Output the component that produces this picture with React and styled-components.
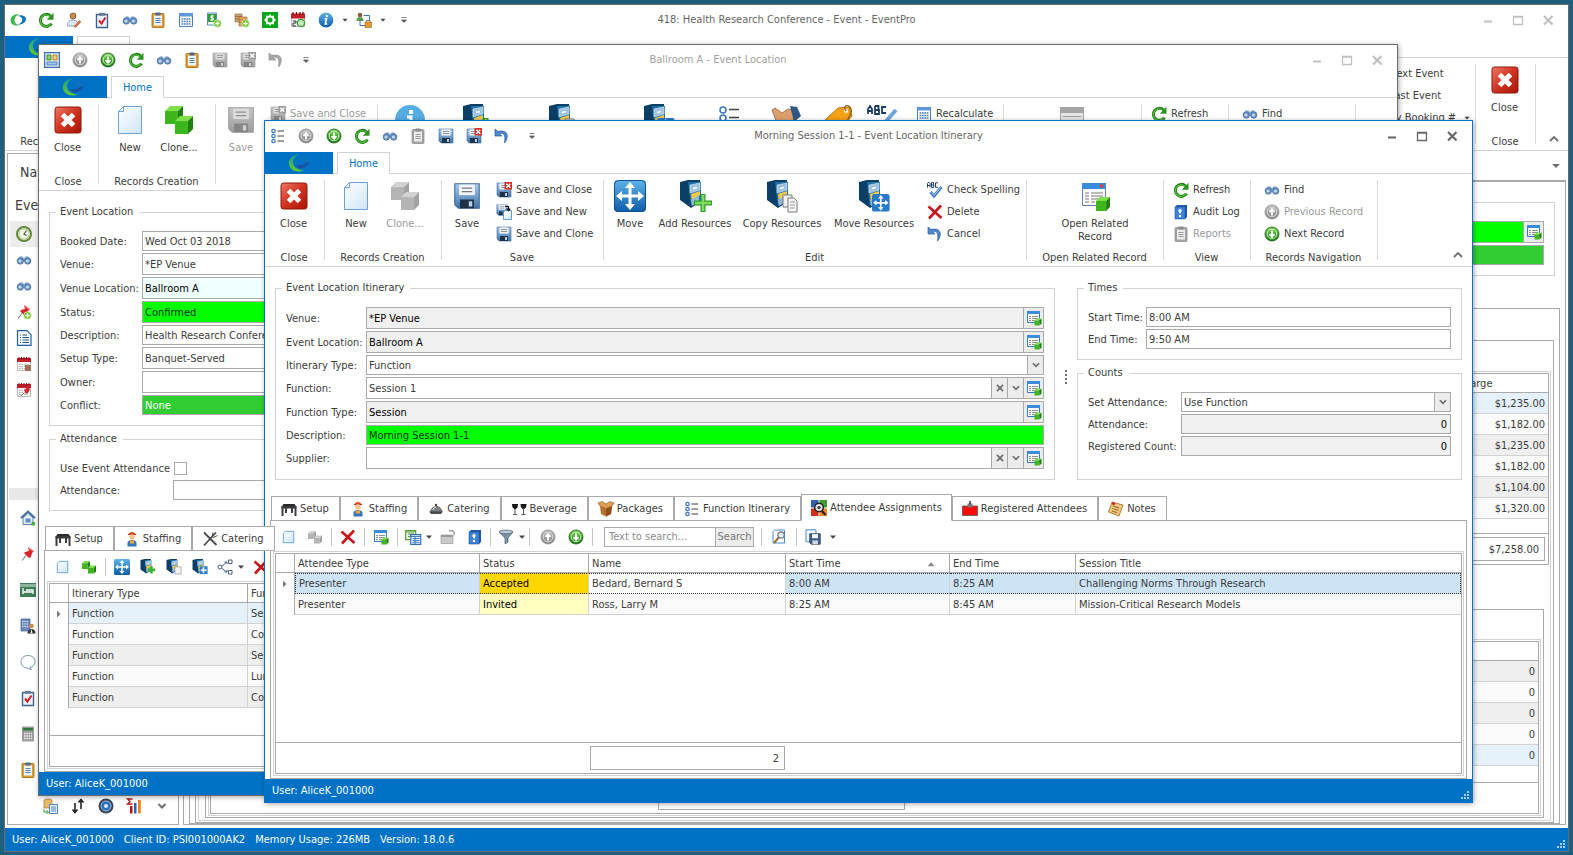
import React from "react";
import styled, { createGlobalStyle, css } from "styled-components";

const blue = "#0072c6";
const line = "#a9a9a9";
const soft = "#d2d2d2";

const Global = createGlobalStyle`
  * { box-sizing: border-box; }
  html, body { margin: 0; background: #1d5f7d; }
  body, button, input, select {
    font-family: "DejaVu Sans Condensed", "Noto Sans", Roboto, sans-serif;
    font-size: 11px;
    line-height: 14px;
    color: #3b3b3b;
  }
  button { background: none; border: 0; padding: 0; margin: 0; }
  input, select { margin: 0; border-radius: 0; outline: 0; }
  svg { display: block; flex: none; overflow: visible; }
`;

/* ---------- icons ---------- */

const Defs = () => (
  <HiddenSvg aria-hidden="true">
    <defs>
      <linearGradient id="gGreen" x1="0" y1="0" x2="0" y2="1"><stop offset="0" stopColor="#7fd45a" /><stop offset="1" stopColor="#157a0c" /></linearGradient>
      <linearGradient id="gGray" x1="0" y1="0" x2="0" y2="1"><stop offset="0" stopColor="#bdbdbd" /><stop offset="1" stopColor="#858585" /></linearGradient>
      <linearGradient id="gRed" x1="0" y1="0" x2="1" y2="1"><stop offset="0" stopColor="#ee7a66" /><stop offset=".5" stopColor="#cf3320" /><stop offset="1" stopColor="#a81406" /></linearGradient>
      <linearGradient id="gBlue" x1="0" y1="0" x2="0" y2="1"><stop offset="0" stopColor="#5fb4ea" /><stop offset="1" stopColor="#0e5ca8" /></linearGradient>
      <linearGradient id="gPage" x1="0" y1="0" x2="1" y2="1"><stop offset="0" stopColor="#ffffff" /><stop offset="1" stopColor="#cfe5fb" /></linearGradient>
      <linearGradient id="gDisk" x1="0" y1="0" x2="0" y2="1"><stop offset="0" stopColor="#a9cbea" /><stop offset="1" stopColor="#3f74ab" /></linearGradient>
      <linearGradient id="gDiskG" x1="0" y1="0" x2="0" y2="1"><stop offset="0" stopColor="#c6c6c6" /><stop offset="1" stopColor="#9c9c9c" /></linearGradient>
      <linearGradient id="gLogo" x1="0" y1="0" x2="0" y2="1"><stop offset="0" stopColor="#1f9e86" /><stop offset="1" stopColor="#63c832" /></linearGradient>
    </defs>
  </HiddenSvg>
);

const Cube = ({ x, y, s, gray }) => {
  const c = gray ? ["#d2d2d2", "#b4b4b4", "#a2a2a2"] : ["#7fe04a", "#3db51c", "#1f8010"];
  const d = s * 0.28;
  return (
    <g transform={`translate(${x} ${y})`}>
      <path d={`M0 ${d}L${d} 0H${s}L${s - d} ${d}Z`} fill={c[0]} />
      <path d={`M0 ${d}H${s - d}V${s}H0Z`} fill={c[1]} />
      <path d={`M${s - d} ${d}L${s} 0V${s - d}L${s - d} ${s}Z`} fill={c[2]} />
    </g>
  );
};
const Disk = ({ gray }) => (
  <g>
    <path d="M1 1h14v14H3l-2-2z" fill={gray ? "url(#gDiskG)" : "url(#gDisk)"} stroke={gray ? "#9a9a9a" : "#41699a"} strokeWidth=".6" />
    <path d="M3.5 1.5h9v6h-9z" fill={gray ? "#dcdcdc" : "#f2f6fa"} />
    <path d="M5 3.5h6M5 5.5h6" stroke={gray ? "#8e8e8e" : "#777"} strokeWidth=".8" />
    <path d="M4 10h8v5H4z" fill={gray ? "#858585" : "#1f3247"} />
    <path d="M9 11h2v3H9z" fill={gray ? "#cfcfcf" : "#b9d2ec"} />
  </g>
);
const Board = ({ gray }) => (
  <g>
    <rect x="2" y="1.5" width="12" height="14" rx="1" fill={gray ? "#a3a3a3" : "#e0a030"} stroke={gray ? "#969696" : "#9b6510"} strokeWidth=".8" />
    <path d="M4 3.5h8v10H4z" fill={gray ? "#ececec" : "#eef5ff"} />
    <path d="M5.5 6.5h5M5.5 8.5h5M5.5 10.5h5" stroke={gray ? "#999" : "#5a7fae"} strokeWidth="1" />
    <path d="M5.5 .5h5v3h-5z" fill={gray ? "#8d8d8d" : "#4e6a8e"} />
  </g>
);
const Cabinet = ({ children }) => (
  <g>
    <path d="M1 2l8-2h12v22L12 28 1 20z" fill="#0b3f66" />
    <path d="M9 2h13v20l-10 4z" fill="#1f6fa8" />
    <path d="M11 5l10-2v7l-10 3z" fill="#9fc3dd" stroke="#d6e8f4" strokeWidth=".6" />
    <path d="M12 14l9-3v4l-8 8z" fill="#f2c84b" />
    <path d="M12 20l8-5v6l-7 5z" fill="#8eb9d8" />
    <path d="M14 8.500l4-1" stroke="#fff" strokeWidth="1.500" />
    {children}
  </g>
);
const Arrows4 = ({ stroke = "#fff" }) => (
  <g stroke={stroke} fill={stroke}>
    <path d="M16 6v20M6 16h20" strokeWidth="3" />
    <path stroke="none" d="M16 2l5 6H11zM16 30l5-6H11zM2 16l6-5v10zM30 16l-6-5v10z" />
  </g>
);
const TableRec = () => (
  <g>
    <path d="M1.500 1.500h12v11h-12z" fill="#fff" stroke="#2f76c4" />
    <path d="M1 1h13v3H1z" fill="#3c8ade" />
    <path d="M3 6.500h2m1 0h6M3 8.500h2m1 0h6M3 10.500h2m1 0h3" stroke="#8d8d8d" />
    <Cube x={8.500} y={8.500} s={7} />
  </g>
);
const Ball = ({ fill, up }) => (
  <g>
    <circle cx="8" cy="8" r="7" fill={fill} stroke={up ? "#8a8a8a" : "#0e5c08"} strokeWidth=".8" />
    <circle cx="8" cy="8" r="4.800" fill="none" stroke={up ? "#dedede" : "#d9f5cc"} strokeWidth=".9" />
    <path d={up ? "M8 11.500V6M5.500 7.800L8 5l2.500 2.800" : "M8 4.500V10M5.500 8.200L8 11l2.500-2.800"} fill="none" stroke="#fff" strokeWidth="1.800" />
  </g>
);
const Cal = ({ children }) => (
  <g>
    <path d="M1.500 3.500h13v11h-13z" fill="#f4f4f4" stroke="#aaa" strokeWidth=".8" />
    <path d="M1 2h14v4H1z" fill="#c3202a" />
    <path d="M3 1v3M5.500 1v3M8 1v3M10.500 1v3M13 1v3" stroke="#8d1018" strokeWidth="1" />
    <path d="M3 8.500h10M3 10.500h10M3 12.500h10" stroke="#b5b5b5" strokeDasharray="1.500 1" />
    {children}
  </g>
);
const Pin = () => (
  <g>
    <path d="M2 14.500l4-5" stroke="#888" strokeWidth="1.200" />
    <path d="M8 1l6 4-2 2-1 4-2 1-5-5 1-1 4-1z" fill="#d8232a" />
    <path d="M9 2l4 3" stroke="#ff8a85" strokeWidth="1.400" />
  </g>
);
const Plus = ({ x = 11.500, y = 11.500 }) => (
  <g>
    <circle cx={x} cy={y} r="3.800" fill="#6cc524" stroke="#e3f5d2" strokeWidth=".7" />
    <path d={`M${x - 2.200} ${y}h4.400M${x} ${y - 2.200}v4.400`} stroke="#fff" strokeWidth="1.400" />
  </g>
);

const icons = {
  swirl: <g><path d="M9.500 2C4 1.500.5 4.800.5 8.500c0 3.700 4 6 9 4.700-3.300-.5-5-2.500-5-4.900 0-3 2-5.200 5-6.300z" fill="#3db64a" /><path d="M7.500 3.800c4.500-1.500 8.500.2 8.500 3.500 0 3.200-3.700 5.600-8 5.200 2.700-1 4.200-2.700 4.200-4.700 0-2-1.700-3.500-4.700-4z" fill="#1176bd" /></g>,
  refresh: <g><path d="M13.500 11.500A6 6 0 1 1 12.500 4" fill="none" stroke="#1d7d12" strokeWidth="3" /><path d="M13.200 11A5.700 5.700 0 1 1 12 4.500" fill="none" stroke="#55c043" strokeWidth="1.300" /><path d="M15.500 .8v7H8.800z" fill="#2b9220" /></g>,
  person: <g><circle cx="7" cy="4" r="3" fill="#c98a4b" stroke="#70431b" strokeWidth=".7" /><path d="M1.500 14c0-4 2-6 5.500-6s5 2 5 5l-1 1z" fill="#dce8f2" stroke="#7591ad" strokeWidth=".8" /><path d="M8 14.500l5.500-6 1.500 1.300-5.500 5.700z" fill="#e8743b" stroke="#8a3c12" strokeWidth=".4" /></g>,
  check: <g><path d="M2.500 2.500h11v13h-11z" fill="#eef4fb" stroke="#3f638f" strokeWidth="1.400" /><path d="M5 .8h6v3H5z" fill="#6c7d92" /><path d="M5 8.500l2.500 3 4-6" fill="none" stroke="#d3202a" strokeWidth="2" /></g>,
  binoc: <g><path d="M3 5l3-1 2 2 2-2 3 1 2 4H1z" fill="#8fb0d6" /><circle cx="4.300" cy="9" r="3.200" fill="#6d93c2" stroke="#3f659a" strokeWidth=".7" /><circle cx="11.700" cy="9" r="3.200" fill="#6d93c2" stroke="#3f659a" strokeWidth=".7" /><circle cx="4" cy="9" r="1.500" fill="#c5daf0" /><circle cx="11.400" cy="9" r="1.500" fill="#c5daf0" /></g>,
  board: <Board />,
  boardGray: <Board gray />,
  calc: <g><path d="M1.500 1.500h13v13h-13z" fill="#fff" stroke="#4a7fc0" /><path d="M1 1h14v3.500H1z" fill="#5c99dc" /><path d="M3.500 7h9M3.500 9.500h9M3.500 12h9" stroke="#4a7fc0" strokeWidth="1.700" strokeDasharray="1.800 .6" /></g>,
  dollar: <g><path d="M1.500 1h9v12h-9z" fill="#fff" stroke="#5d88bd" /><path d="M2 2h8v8H2z" fill="#2f9d32" /><path d="M8 4H5v2h2.500v2H4M6 3v6" fill="none" stroke="#fff" /><Plus /></g>,
  coins: <g><path d="M1 2h7v8H1z" fill="#c8a37a" stroke="#8a6a45" strokeWidth=".6" /><path d="M5 5h8v9H5z" fill="#e2a35a" stroke="#9a6020" strokeWidth=".6" /><path d="M1 4.500h7M1 7h4M5 8h8M5 10.500h6" stroke="#9a6020" strokeWidth=".6" /><Plus /></g>,
  gear: <g><path d="M0 0h16v16H0z" fill="#08a818" /><path d="M8 2l1.500 2L12 3.500V6l2 2-2 2v2.500L9.500 12 8 14l-1.500-2L4 12.500V10L2 8l2-2V3.500L6.500 4z" fill="#fff" /><circle cx="8" cy="8" r="2.500" fill="#08a818" /></g>,
  cal20: <g><path d="M1.500 3.500h13v11h-13z" fill="#f5f5f5" stroke="#aaa" strokeWidth=".8" /><path d="M1 1.500h14v5H1z" fill="#c3202a" /><path d="M3 0v3M6.500 0v3M10 0v3M13 0v3" stroke="#7d0f16" strokeWidth="1.300" /><path d="M3 9h3v2H3v3h3" fill="none" stroke="#333" /><circle cx="11" cy="11" r="3.600" fill="#c5ecc0" stroke="#3d9b38" strokeWidth="1.400" /></g>,
  info: <g><circle cx="8" cy="8" r="7.400" fill="url(#gBlue)" /><path d="M8.800 3v2" stroke="#fff" strokeWidth="2" /><path d="M6.500 6.800h2L7.300 12h2" fill="none" stroke="#fff" strokeWidth="1.600" /></g>,
  orgLock: <g><circle cx="4" cy="3" r="2.300" fill="#8e5e35" /><path d="M.5 9c0-3 1.500-4 3.500-4s3.500 1 3.500 4z" fill="#5e9a52" /><path d="M7.500 3.500h6V8M4 9v4.500h5" fill="none" stroke="#3c73b5" /><path d="M9 10h6.500v5.500H9z" fill="#e8982c" stroke="#8a5510" strokeWidth=".5" /><path d="M10.500 10V8.500h3.500V10" fill="none" stroke="#777" /></g>,
  layout: <g><path d="M.7.7h14.600v14.600H.7z" fill="#e8f1fa" stroke="#3c6fae" strokeWidth="1.300" /><path d="M3 3h4v5H3z" fill="#8fd06b" stroke="#2f7a1c" strokeWidth=".8" /><path d="M9 3h4v5H9z" fill="#f2cf6c" stroke="#a07518" strokeWidth=".8" /><path d="M3 10h10v3H3z" fill="#9ec6ee" stroke="#3c6fae" strokeWidth=".8" /></g>,
  up: <Ball fill="url(#gGray)" up />,
  down: <Ball fill="url(#gGreen)" />,
  save: <Disk />,
  saveGray: <Disk gray />,
  saveX: <g><Disk /><path d="M8.500 0h7.500v7.500H8.500z" fill="#d32f22" /><path d="M10.300 1.800l4 4m0-4l-4 4" stroke="#fff" strokeWidth="1.500" /></g>,
  saveXGray: <g><Disk gray /><path d="M8.500 0h7.500v7.500H8.500z" fill="#9a9a9a" /><path d="M10.300 1.800l4 4m0-4l-4 4" stroke="#fff" strokeWidth="1.500" /></g>,
  saveNew: <g><g transform="scale(.75)"><Disk /></g><path d="M9 6.500h6.500v9H7.500V8z" fill="url(#gPage)" stroke="#4a86c6" strokeWidth=".8" /><path d="M9 2.500h3.500V6M10.700 4.600l1.800 2 1.800-2" fill="none" stroke="#111" strokeWidth="1.200" /></g>,
  undo: <path d="M1 1v7h7L5.500 5.500C9 4.500 12 6 10.500 15 15 10 15 1 4 3.500z" fill="#4b8ad0" stroke="#28599a" strokeWidth=".7" />,
  undoGray: <path d="M1 1v7h7L5.500 5.500C9 4.500 12 6 10.500 15 15 10 15 1 4 3.500z" fill="#a8a8a8" stroke="#8c8c8c" strokeWidth=".7" />,
  list: <g fill="#fff" stroke="#3b77bd" strokeWidth="1.200"><circle cx="3.500" cy="3" r="1.700" /><circle cx="3.500" cy="8" r="1.700" /><circle cx="3.500" cy="13" r="1.700" /><path d="M7.500 3H14M7.500 8H14M7.500 13H14" stroke="#3a3a3a" /></g>,
  spell: <g><path d="M.5 5.500V1.500L1.800 0 3 1.500v4M.5 3.500H3M4.500.5v5h2.300V3H4.500M4.500.5h2V3M11 .8H8.500v4.500H11" fill="none" stroke="#20406e" /><path d="M3.500 10l3.500 4 7.500-9" fill="none" stroke="#3f78bd" strokeWidth="3" /><path d="M4 10.300l3 3 7-8" fill="none" stroke="#a9d0f4" strokeWidth="1" /></g>,
  del: <path d="M1.500 2.500L14.500 14M14 1.500L2 14.500" stroke="#c8141a" strokeWidth="2.600" fill="none" />,
  audit: <g><path d="M2 3l2-2h10v12l-2 2H2z" fill="#1d57a8" /><path d="M2 3h10v12H2z" fill="#3b82d8" stroke="#1d57a8" strokeWidth=".6" /><path d="M7 4.500l1.800 1.800L7.500 9.500h-1L5.200 6.300z" fill="#fff" /><circle cx="7" cy="12" r="1.200" fill="#fff" /></g>,
  record: <TableRec />,
  page: <path d="M4 1.500h9.500v13h-12V4z" fill="url(#gPage)" stroke="#5e9bd8" />,
  cubes: <g><Cube x={1} y={2} s={8} /><Cube x={7} y={6.500} s={8} /></g>,
  cubesGray: <g><Cube x={1} y={2} s={8} gray /><Cube x={7} y={6.500} s={8} gray /></g>,
  clock: <g><circle cx="8" cy="8" r="7" fill="#eef6e6" stroke="#64853c" strokeWidth="2" /><circle cx="8" cy="8" r="5.200" fill="none" stroke="#a9cc80" /><path d="M10.500 4.500L8 8l2.500 1.500" fill="none" stroke="#555" strokeWidth="1.200" /></g>,
  pin: <Pin />,
  pinPlus: <g><Pin /><Plus /></g>,
  doc: <g><path d="M1.500.7h9.500l4 4V15.300H1.500z" fill="#f5faff" stroke="#1e62a8" strokeWidth="1.200" /><path d="M4 5h1m1.500 0H11M4 7.500h1m1.500 0H13M4 10h1m1.500 0H13M4 12.500h1m1.500 0H13" stroke="#24507e" /></g>,
  calBox: <Cal><path d="M9 9h6v6H9z" fill="#a5705a" /></Cal>,
  calPin: <Cal><path d="M5 14l3-3" stroke="#777" /><path d="M8 8l4-3 2 2-2 4-2 1z" fill="#d8232a" /></Cal>,
  house: <g><path d="M1 8l7-6.500L15 8" fill="none" stroke="#46719f" strokeWidth="2" /><path d="M3 8l5-4.500L13 8v6.500H3z" fill="#e9f2fb" stroke="#5a82ad" /><path d="M5.500 8.500h5v4h-5z" fill="#5b8dc4" /><path d="M11.500 12h3.500v3.500h-3.500z" fill="#4caf3a" /></g>,
  bed: <g><path d="M0 1h16v14H0z" fill="#3f7d55" /><path d="M0 2h16v3H0z" fill="#8ab59a" /><path d="M3 6v6M3 10h10V8H6M13 9v3" fill="none" stroke="#fff" strokeWidth="1.300" /></g>,
  building: <g><path d="M1 1h9v12H1z" fill="#6e8cba" stroke="#3e5f93" strokeWidth=".7" /><path d="M2 3.500h7M2 6h7M2 8.500h7" stroke="#d8e4f5" strokeDasharray="1.500 .8" /><circle cx="11.500" cy="8" r="2.300" fill="#d08a45" /><path d="M7.500 15.500c0-3 1.500-4.500 4-4.500s4 1.500 4 4.500z" fill="#333" /><path d="M11.500 11l1 4h-2z" fill="#fff" /></g>,
  chat: <path d="M8 1.500c4 0 7 2.500 7 5.800s-2 5.700-5 6.200l1.500 2-5-1.700C3 13.500 1 11 1 7.500S4 1.500 8 1.500z" fill="#fdfeff" stroke="#7c95ae" />,
  calcGray: <g><path d="M2 .5h12v15H2z" fill="#9b9b9b" /><path d="M3 2h10v2.500H3z" fill="#2e7a3a" /><path d="M4 7.500h8M4 10h8M4 12.500h8" stroke="#eee" strokeWidth="1.500" strokeDasharray="1.500 .8" /></g>,
  dbDoc: <g><path d="M2 2c2-1.500 6-1.500 8 0v8H2z" fill="#e8b96a" stroke="#a67828" strokeWidth=".7" /><path d="M7.500 6.500h8v9h-8z" fill="#eef5fd" stroke="#4a7fc0" /><path d="M9 9h5M9 11h5M9 13h5" stroke="#4a7fc0" /><path d="M2 11v3h4M4.500 12L6.500 14l-2 2" fill="none" stroke="#2f9d32" /></g>,
  sort: <path d="M5 5v9M2.500 11.500L5 14.500l2.500-3M11 11V2M8.500 4.500L11 1.500l2.500 3" fill="none" stroke="#222" strokeWidth="1.600" />,
  target: <g><circle cx="8" cy="8" r="7.500" fill="#39455a" /><circle cx="8" cy="8" r="5" fill="#2b6fc0" stroke="#a9b6c9" /><circle cx="8" cy="8" r="2" fill="#d8ebff" /></g>,
  stats: <g><path d="M6.500 1H1.500l2.500 2.500L1.500 6h5" fill="none" stroke="#b5121b" strokeWidth="1.300" /><path d="M4 8h2.500v7.500H4z" fill="#b5121b" /><path d="M8 5h2.500v10.500H8z" fill="#2f62b0" /><path d="M12 2h2.800v13.500H12z" fill="#ef8420" /></g>,
  table: <g><path d="M2.500 3h11l2 3H.5z" fill="#2a2a2a" /><path d="M.5 5h15v2.500H.5z" fill="#3a3a3a" /><path d="M1.500 6v9M5 7v5M11 7v5M14.500 6v9" stroke="#3f3f3f" strokeWidth="2" /></g>,
  staff: <g><path d="M4.500 3.500C5 0 11 0 11.500 3.500z" fill="#df4a1c" /><path d="M4 3.500h8" stroke="#b9340c" /><circle cx="8" cy="6" r="2.800" fill="#f7c491" /><path d="M3.500 15.500V12c0-2 2-3 4.500-3s4.500 1 4.500 3v3.500z" fill="#3579bd" /><path d="M6 9.500h4v3H6z" fill="#f5a52c" /></g>,
  utensils: <g><path d="M2 1.500L14.500 14M14 1.500L2 14.500" stroke="#4a4a4a" strokeWidth="1.800" fill="none" /><path d="M11 1.500l-1 4 1.500 1 4-2" fill="none" stroke="#4a4a4a" /></g>,
  cloche: <g><path d="M2.500 10.500c1-6 10-7.500 11.500 0z" fill="#7c8186" stroke="#4a4d50" strokeWidth=".7" /><path d="M1 10.500h14l-2 2.500H3z" fill="#4a4d50" /><circle cx="8" cy="4" r="1.200" fill="#444" /><path d="M5 9c.5-2 1.500-2.500 3-3" fill="none" stroke="#e5e8ea" /></g>,
  glasses: <g><path d="M1 3h6l-.5 3.500L4 8.500 1.500 6.500zM9.500 3h6L15 6.500l-2.500 2L10 6.500z" fill="#151515" /><path d="M4 8v5M2 13.500h4M12.500 8v5M10.500 13.500h4" stroke="#555" /></g>,
  box: <g><path d="M2 5l6 2.500L14 5l-1 8-5 2.500L3 13z" fill="#b5702c" /><path d="M8 7.500V15.500l5-2.500 1-8z" fill="#8d4f18" /><path d="M2 5L0 2l4-1.500L8 3l4-2.500L16 2l-2 3-6 2.500z" fill="#e0a055" stroke="#8d4f18" strokeWidth=".6" /></g>,
  assign: <g><path d="M0 0h7.500v7.500H0z" fill="#2f62b0" /><path d="M8.500 0H16v7.500H8.500z" fill="#3f9d2d" /><path d="M0 8.500h7.500V16H0z" fill="#cf2c1c" /><path d="M8.500 8.500H16V16H8.500z" fill="#ef8420" /><circle cx="8" cy="7.500" r="4.300" fill="#e4e4e4" stroke="#222" strokeWidth="1.500" /><circle cx="8" cy="7.500" r="1.600" fill="#333" /><path d="M11 11l3.500 4" stroke="#222" strokeWidth="2" /></g>,
  badge: <g><path d="M.5 5h15v9.500H.5z" fill="#ff0a0a" stroke="#555" strokeWidth=".8" /><path d="M5.500 2.500h5v4h-5z" fill="#777" /><path d="M8 0v3" stroke="#333" strokeWidth="1.500" /></g>,
  notes: <g><path d="M4 1l11 3-4 11L.5 11z" fill="#edc57c" stroke="#9c6c28" strokeWidth=".8" /><path d="M5 5l6 2M4.500 7.500l6 2M4 10l5 1.700" stroke="#9c6c28" /><circle cx="5.500" cy="2.500" r="1.600" fill="#d8232a" /></g>,
  grids: <g><path d="M.7 1.700h10v9h-10z" fill="#eef8e4" stroke="#5a9a35" strokeWidth="1.200" /><path d="M.7 3h10M3 5h6M3 7.500h6" stroke="#5a9a35" /><path d="M5.700 5.700h10v9.600h-10z" fill="#eaf3fd" stroke="#2f6fb8" strokeWidth="1.200" /><path d="M5.700 7.500h10M7.500 9.500h7M7.500 11.500h7M7.500 13.300h7M10 8v7" stroke="#2f6fb8" strokeWidth=".9" /></g>,
  folder: <g><path d="M1 6h12v8.500H1z" fill="#c9c9c9" stroke="#9c9c9c" strokeWidth=".7" /><path d="M1 6h12v2H1z" fill="#999" /><path d="M9 2c3-1 6 0 5 4" fill="none" stroke="#a0a0a0" strokeWidth="1.500" /></g>,
  funnel: <g><path d="M1 3l6 6v6l3-2V9l5-6z" fill="#7f92a6" stroke="#4f5f70" strokeWidth=".7" /><ellipse cx="8" cy="3" rx="7" ry="1.800" fill="#c3cedb" stroke="#4f5f70" strokeWidth=".8" /></g>,
  preview: <g><path d="M3.500 1h10v13H2V2.500z" fill="#fff" stroke="#4a8bd0" /><circle cx="10" cy="6" r="3.200" fill="#e3f0fc" stroke="#667788" strokeWidth="1.200" /><path d="M7.700 8.500L3 14" stroke="#9a6a2a" strokeWidth="2" /></g>,
  savePage: <g><path d="M1 .8h10v12H1z" fill="#f4f9ff" stroke="#4a8bd0" /><g transform="translate(4 4) scale(.75)"><path d="M1 1h14v14H3l-2-2z" fill="#3f5f8c" stroke="#24364f" /><path d="M4 1.500h8v5.500H4z" fill="#f2f6fa" /><path d="M4.500 10h7.500v5H4.500z" fill="#cfd9e6" /></g></g>,
  nodes: <g fill="#fff" stroke="#46607e"><circle cx="3" cy="8" r="2" /><path d="M11.500 1h3.500v3.500h-3.500zM11.500 11.500H15V15h-3.500zM5 7l5-4M7.500 3H10v2M5 9.500l5 3.500M7.500 13H10v-2" /></g>,
  move16: <g transform="scale(.5)"><rect width="32" height="32" rx="3" fill="url(#gBlue)" /><Arrows4 /></g>,
  cabAdd16: <g transform="scale(.52)"><Cabinet><path d="M22 14v14M15 21h14" stroke="#39b52c" strokeWidth="5" /></Cabinet></g>,
  cabCopy16: <g transform="scale(.52)"><Cabinet><path d="M17 15h12v14H17z" fill="#f0f0f0" stroke="#777" /></Cabinet></g>,
  cabMove16: <g transform="scale(.52)"><Cabinet><path d="M15 14h15v15H15z" fill="#2f7fce" /><path d="M22 16v11M17 21.500h11" stroke="#fff" strokeWidth="3" /></Cabinet></g>,

  bigClose: <g><rect x="3" y="3" width="26" height="26" rx="2.500" fill="url(#gRed)" stroke="#8f1609" /><path d="M10.500 10.500l11 11M21.500 10.500l-11 11" stroke="#fff" strokeWidth="5" /></g>,
  bigPage: <path d="M9.500 2.500h18v27h-23v-22z M9.500 2.500v5h-5" fill="url(#gPage)" stroke="#6da2d8" />,
  bigCubes: <g><Cube x={2} y={2} s={18} /><Cube x={12} y={12} s={18} /></g>,
  bigCubesGray: <g><Cube x={2} y={2} s={18} gray /><Cube x={12} y={12} s={18} gray /></g>,
  bigSave: <g transform="translate(2 2) scale(1.75)"><Disk /></g>,
  bigSaveGray: <g transform="translate(2 2) scale(1.75)"><Disk gray /></g>,
  bigMove: <g><rect width="32" height="32" rx="4" fill="url(#gBlue)" /><rect x=".5" y=".5" width="31" height="31" rx="4" fill="none" stroke="#0e4f90" /><Arrows4 /></g>,
  bigCabAdd: <Cabinet><path d="M24 14v18M15 23h18" stroke="#2f9d26" strokeWidth="5" /><path d="M24 15v16M16 23h16" stroke="#7fdc62" strokeWidth="2.500" /></Cabinet>,
  bigCabCopy: <Cabinet><path d="M17 15h9v12h-9z" fill="#efefef" stroke="#7b7b7b" /><path d="M22 18h6l3 3v11h-9z" fill="#f7f7f7" stroke="#7b7b7b" /><path d="M24 22h5M24 25h5M24 28h5" stroke="#999" /></Cabinet>,
  bigCabMove: <Cabinet><g transform="translate(14 14) scale(.55)"><rect width="32" height="32" rx="4" fill="#2879c8" /><Arrows4 /></g></Cabinet>,
  bigRecord: <g><path d="M3.500 3.500h23v22h-23z" fill="#fff" stroke="#5b86bd" /><path d="M3 3h24v6H3z" fill="#3c8ade" /><path d="M21 4.500h3v3h-3z" fill="#e23c22" /><path d="M6 13h4m2 0h12M6 16h4m2 0h12M6 19h4m2 0h8M6 22h4m2 0h4" stroke="#777" /><Cube x={17} y={17} s={14} /></g>,
  bigRecordGray: <g><path d="M4.500 3.500h23v26h-23z" fill="#e4e4e4" stroke="#a5a5a5" /><path d="M4 3h24v6H4z" fill="#a5a5a5" /><path d="M7 12.500h18M7 16.500h18" stroke="#999" /></g>,
  bigInfo: <g><circle cx="16" cy="16" r="15" fill="#55ade4" /><path d="M17 6v4" stroke="#fff" strokeWidth="4" /><path d="M13 13h4v12" fill="none" stroke="#fff" strokeWidth="3" /></g>,
  bigList: <g fill="#fff" stroke="#3b77bd" strokeWidth="1.500"><circle cx="9" cy="6" r="3" /><circle cx="9" cy="14" r="3" /><path d="M15 5.500h10M15 13.500h10" stroke="#444" /></g>,
  bigHand: <g><path d="M1 6l3-2 7 5 6-4 5 1 2 9-9 6-9-2z" fill="#dca06e" stroke="#9a6238" strokeWidth=".8" /><path d="M19 2l7 1 4 9-7 6z" fill="#2f5784" /></g>,
  bigTag: <g><path d="M2 17L16 4l11-1 3 9-14 16z" fill="#f5a214" stroke="#b07208" /><circle cx="24" cy="7" r="2" fill="#fff" /><path d="M24 7c-5-7 7-8 5 2l-4 8" fill="none" stroke="#9a6a2a" strokeWidth="1.500" /></g>,
  bigSpell: <g><path d="M1 10V5l2-3 2 3v5M1 7h4M8 2v8h4V6H8M8 2h3.500v4M19 3h-4v6h4" fill="none" stroke="#1c3a68" strokeWidth="1.800" /><path d="M6 18l6 7L29 6" fill="none" stroke="#6fa5dc" strokeWidth="4" /></g>,

  chevDown: <path d="M4.500 6L8 9.500 11.500 6" fill="none" stroke="#6e6e6e" strokeWidth="2" />,
  chevUp: <path d="M4 10l4-4 4 4" fill="none" stroke="#6e6e6e" strokeWidth="1.800" />,
  cross: <path d="M4.500 4.500l7 7M11.500 4.500l-7 7" stroke="#6e6e6e" strokeWidth="2" />,
  drop: <path d="M5 6.500h6L8 9.800z" fill="#444" />,
  dropWide: <path d="M4 6h8l-4 4z" fill="#6e6e6e" />,
  custom: <path d="M5.500 5.500h5M5.500 8h5L8 10.500z" fill="#555" stroke="#666" strokeWidth=".8" />,
  sortUp: <path d="M4 10.500h8l-4-4.500z" fill="#8a8a8a" />,
  play: <path d="M6 4.500v7L9.500 8z" fill="#7a7a7a" />,
  min: <path d="M4 9.500h8" stroke="currentColor" strokeWidth="2" />,
  max: <path d="M3.500 4.500h9v8h-9zM3.500 5h9" fill="none" stroke="currentColor" strokeWidth="1.300" />,
  closeW: <path d="M4 4l8.500 8.500M12.500 4L4 12.500" stroke="currentColor" strokeWidth="2.200" />,
};

const Icon = ({ n, s = 16 }) => (
  <svg width={s} height={s} viewBox={s === 32 ? "0 0 32 32" : "0 0 16 16"} aria-hidden="true">{icons[n]}</svg>
);
const TabLogo = () => (
  <svg width="24" height="18" viewBox="0 0 24 18" aria-hidden="true">
    <path d="M13 0C5 1 1 6 2 10.500 3 16 9 19 17 16.500 10 16 6 12.500 6 8.500 6 4.500 8.500 1.500 13 0z" fill="url(#gLogo)" />
    <path d="M9 11.500c5.500.5 9.500-1.500 13.500-5.500-.5 6-6.500 9.500-11.500 8z" fill="#1b4fa0" />
    <path d="M15 3h3v2h4v3l-5 1V6h-2z" fill="#1470b8" />
  </svg>
);

/* ---------- desktop and windows ---------- */

const HiddenSvg = styled.svg`position: absolute; width: 0; height: 0;`;

const Desktop = styled.div`
  position: relative;
  min-width: 1300px;
  height: 100vh;
  min-height: 820px;
  background: #1d5f7d;
  overflow: hidden;
`;

const placements = {
  main: css`left: 4px; top: 4px; right: 4px; bottom: 3px;`,
  middle: css`left: 38px; top: 44px; right: 175px; bottom: 59px;`,
  front: css`left: 264px; top: 120px; right: 100px; bottom: 52px;`,
};
const WindowFrame = styled.section`
  position: absolute;
  ${(p) => placements[p.$place]}
  display: flex;
  flex-direction: column;
  background: #fff;
  border: 1px solid ${(p) => (p.$active ? blue : "#6b6b6b")};
  box-shadow: ${(p) => (p.$place === "main" ? "none" : "1px 1px 5px rgba(0, 0, 0, 0.35)")};
  overflow: ${(p) => (p.$place === "main" ? "hidden" : "visible")};
`;
const TitleBar = styled.header`
  display: grid;
  grid-template-columns: 1fr auto 1fr;
  align-items: center;
  height: 31px;
  flex: none;
  padding-bottom: 1px;
`;
const Title = styled.h1`
  margin: 0;
  font-size: 11px;
  font-weight: normal;
  color: ${(p) => p.$c};
`;
const Quick = styled.div`display: flex; align-items: center;`;
const QuickBtn = styled.button`
  display: flex;
  align-items: center;
  justify-content: center;
  width: ${(p) => p.$w || 28}px;
  height: 24px;
  padding-right: 2px;
`;
const WinBtns = styled.div`
  display: flex;
  justify-content: flex-end;
  padding-right: 5px;
  color: ${(p) => (p.$active ? "#666" : "#c0c0c0")};
`;
const WinBtn = styled.button`
  display: grid;
  place-items: center;
  width: 30px;
  height: 24px;
  color: inherit;
`;

/* ---------- ribbon ---------- */

const RibbonTabs = styled.nav`
  display: flex;
  height: 22px;
  flex: none;
  &::after { content: ""; flex: 1; border-bottom: 1px solid ${soft}; }
`;
const AppButton = styled.button`
  display: grid;
  place-items: center;
  width: 68px;
  background: ${blue};
`;
const TabGap = styled.span`width: 4px; border-bottom: 1px solid ${soft};`;
const HomeTab = styled.button`
  width: 53px;
  padding-top: 1px;
  border: 1px solid ${soft};
  border-bottom: 0;
  color: ${blue};
`;
const RibbonBar = styled.div`
  display: flex;
  height: 93px;
  flex: none;
  padding-top: 4px;
  border-bottom: 1px solid ${soft};
`;
const GroupBoxed = styled.div`
  display: flex;
  flex-direction: column;
  flex: none;
  width: ${(p) => p.$w}px;
  background: linear-gradient(#dcdcdc, #dcdcdc) right 2px / 1px 80px no-repeat;
`;
const GroupBody = styled.div`
  display: flex;
  align-items: flex-start;
  height: 73px;
  padding: 0 6px;
`;
const GroupLabel = styled.span`padding-right: 2px; text-align: center; white-space: nowrap;`;
const BigBtn = styled.button`
  display: flex;
  flex-direction: column;
  align-items: center;
  gap: 5px;
  flex: none;
  width: ${(p) => p.$w}px;
  padding-top: 2px;
  line-height: 13px;
  color: ${(p) => (p.disabled ? "#9a9a9a" : "#3b3b3b")};
  span { white-space: ${(p) => (p.$wrap ? "normal" : "nowrap")}; }
`;
const SmallCol = styled.div`margin-left: ${(p) => p.$ml || 0}px;`;
const SmallBtn = styled.button`
  display: flex;
  align-items: center;
  gap: 4px;
  height: 22px;
  padding: 1px 4px 0 3px;
  white-space: nowrap;
  color: ${(p) => (p.disabled ? "#9a9a9a" : "#3b3b3b")};
`;
const RibbonEnd = styled.button`
  align-self: flex-end;
  margin: 0 6px 3px auto;
  padding-left: 10px;
`;

const Big = ({ icon, w, label, off, wrap }) => (
  <BigBtn $w={w} disabled={off} $wrap={wrap} aria-label={label ? undefined : icon}>
    <Icon n={icon} s={32} />
    {label && <span>{label}</span>}
  </BigBtn>
);
const Small = ({ icon, label, off, arrow }) => (
  <SmallBtn disabled={off}>
    <Icon n={icon} />
    {label}
    {arrow && <Icon n="drop" s={14} />}
  </SmallBtn>
);
const Group = ({ w, label, children }) => (
  <GroupBoxed $w={w}>
    <GroupBody>{children}</GroupBody>
    <GroupLabel>{label}</GroupLabel>
  </GroupBoxed>
);
const CloseGroup = () => <Group w={60} label="Close"><Big icon="bigClose" w={45} label="Close" /></Group>;

const quickWidths = { drop: 10, custom: 32 };
const TitleRow = ({ title, color, quick, active }) => (
  <TitleBar>
    <Quick>
      {quick.map((q, i) => (
        <QuickBtn key={i} $w={quickWidths[q]} aria-label={q}><Icon n={q} s={q === "drop" ? 14 : 16} /></QuickBtn>
      ))}
    </Quick>
    <Title $c={color}>{title}</Title>
    <WinBtns $active={active}>
      <WinBtn aria-label="Minimize"><Icon n="min" /></WinBtn>
      <WinBtn aria-label="Maximize"><Icon n="max" /></WinBtn>
      <WinBtn aria-label="Close"><Icon n="closeW" /></WinBtn>
    </WinBtns>
  </TitleBar>
);
const RibbonHead = ({ label = "Home" }) => (
  <RibbonTabs>
    <AppButton aria-label="Application menu"><TabLogo /></AppButton>
    <TabGap />
    <HomeTab>{label}</HomeTab>
  </RibbonTabs>
);

/* ---------- forms ---------- */

const Box = styled.fieldset`
  min-width: 0;
  margin: ${(p) => p.$m || "0"};
  padding: 12px 10px 10px;
  border: 1px solid ${soft};
  flex: ${(p) => (p.$grow ? 1 : "none")};
`;
const Legend = styled.legend`
  height: 14px;
  margin-left: -4px;
  padding: 0 6px 0 4px;
`;
const Rows = styled.div`display: flex; flex-direction: column; gap: 2px;`;
const Row = styled.div`
  display: flex;
  align-items: stretch;
  height: ${(p) => (p.$tall ? 22 : 20)}px;
`;
const Label = styled.label`
  flex: none;
  width: ${(p) => p.$w}px;
  align-self: center;
  padding-top: 1px;
  white-space: nowrap;
`;
const Control = styled.div`
  flex: 1;
  min-width: 0;
  display: flex;
  border: 1px solid ${line};
  background: ${(p) => p.$bg || "#fff"};
`;
const field = css`
  flex: 1;
  min-width: 0;
  width: 100%;
  border: 0;
  padding: 1px 3px 0 2px;
  background: transparent;
  color: ${(p) => p.$c || "#3b3b3b"};
`;
const Input = styled.input`
  ${field}
  text-align: ${(p) => (p.$right ? "right" : "left")};
`;
const Select = styled.select`${field} appearance: none;`;
const InBtn = styled.button`
  display: grid;
  place-items: center;
  flex: none;
  width: ${(p) => p.$w || 16}px;
  border-left: 1px solid ${line};
  background: #ececec;
`;
const Chev = styled.span`
  display: grid;
  place-items: center;
  flex: none;
  width: 16px;
  border-left: 1px solid ${line};
  background: #ececec;
  pointer-events: none;
`;
const Check = styled.input`
  appearance: none;
  width: 13px;
  height: 13px;
  align-self: center;
  border: 1px solid ${line};
  background: #fff;
`;

const Field = ({ id, label, lw, value = "", tall, bg, c, right, clear, drop, lookup, options }) => (
  <Row $tall={tall}>
    <Label htmlFor={id} $w={lw}>{label}</Label>
    <Control $bg={bg}>
      {options ? (
        <>
          <Select id={id} defaultValue={value}>{options.map((o) => <option key={o}>{o}</option>)}</Select>
          <Chev><Icon n="chevDown" s={14} /></Chev>
        </>
      ) : (
        <Input id={id} defaultValue={value} $c={c} $right={right} />
      )}
      {clear && <InBtn aria-label={`Clear ${label}`}><Icon n="cross" s={14} /></InBtn>}
      {drop && <InBtn aria-label={`Open ${label}`}><Icon n="chevDown" s={14} /></InBtn>}
      {lookup && <InBtn $w={20} aria-label={`Look up ${label}`}><Icon n="record" /></InBtn>}
    </Control>
  </Row>
);

/* ---------- tabs, toolbars, grids ---------- */

const Tabs = styled.nav`
  display: flex;
  align-items: flex-end;
  height: 27px;
  flex: none;
  position: relative;
  z-index: 1;
  padding-left: 1px;
  overflow: hidden;
`;
const Tab = styled.button`
  display: flex;
  align-items: center;
  gap: 3px;
  flex: none;
  height: ${(p) => (p.$on ? 27 : 25)}px;
  padding: ${(p) => (p.$on ? "0 9px" : "0 10px 0 9px")};
  border: 1px solid ${line};
  border-bottom-color: ${(p) => (p.$on ? "#fff" : line)};
  background: #fff;
  white-space: nowrap;
`;
const Pane = styled.div`
  flex: 1;
  min-height: 0;
  display: flex;
  flex-direction: column;
  margin-top: -1px;
  border: 1px solid ${line};
`;
const Tools = styled.div`
  display: flex;
  align-items: center;
  flex: none;
  height: 30px;
  padding: 2px 0 0 5px;
`;
const Tool = styled.button`
  display: flex;
  align-items: center;
  justify-content: center;
  width: ${(p) => p.$w || 26}px;
  height: 24px;
`;
const Sep = styled.span`
  width: 1px;
  height: 18px;
  margin: 0 3px;
  background: #c4c4c4;
`;
const Search = styled.form`display: flex; height: 20px; margin: 0 4px 0 8px;`;
const SearchInput = styled.input`
  width: 112px;
  padding: 0 4px;
  border: 1px solid ${line};
  &::placeholder { color: #8c8c8c; opacity: 1; }
`;
const SearchBtn = styled.button`
  width: 39px;
  margin-left: -1px;
  border: 1px solid ${line};
  background: #ececec;
  color: #777;
`;
const GridOuter = styled.div`
  flex: 1;
  min-height: 0;
  display: flex;
  flex-direction: column;
  margin: 0 2px 2px;
  padding: 1px;
  border: 1px solid ${soft};
`;
const Grid = styled.div`
  flex: ${(p) => (p.$h ? "none" : 1)};
  height: ${(p) => (p.$h ? `${p.$h}px` : "auto")};
  min-height: 0;
  display: flex;
  flex-direction: column;
  margin: ${(p) => p.$m || "0"};
  border: 1px solid ${line};
`;
const Table = styled.table`
  width: 100%;
  table-layout: fixed;
  border-collapse: separate;
  border-spacing: 0;
`;
const Th = styled.th`
  height: 19px;
  padding: 1px 3px 0;
  font-weight: normal;
  text-align: left;
  border-bottom: 1px solid ${line};
  border-right: 1px solid ${line};
  white-space: nowrap;
  overflow: hidden;
  &:last-child { border-right: 0; }
`;
const SortHead = styled.span`display: flex; justify-content: space-between; align-items: center; padding-right: 8px;`;
const Td = styled.td`
  height: 21px;
  padding: ${(p) => (p.$focus ? "0 3px" : "1px 3px 0")};
  border-right: 1px solid ${soft};
  border-bottom: 1px solid ${soft};
  background: ${(p) => p.$bg || "#fff"};
  color: ${(p) => p.$c || "inherit"};
  text-align: ${(p) => (p.$right ? "right" : "left")};
  white-space: nowrap;
  overflow: hidden;
  &:last-child { border-right: 0; }
  ${(p) => p.$focus && css`
    border-top: 1px dotted #333;
    border-bottom: 1px dotted #333;
    &:nth-child(2) { border-left: 1px dotted #333; }
    &:last-child { border-right: 1px dotted #333; }
  `}
`;
const MarkTd = styled.td`
  padding: 0;
  border-right: 1px solid ${line};
  svg { margin: 0 auto; }
`;
const GridFoot = styled.div`
  display: flex;
  flex: none;
  height: 31px;
  margin-top: auto;
  padding: 3px;
  border-top: 1px solid ${line};
`;
const Total = styled.output`
  width: ${(p) => p.$w}px;
  height: 24px;
  margin-left: ${(p) => p.$ml};
  padding: 5px 5px 0;
  border: 1px solid ${line};
  text-align: right;
`;

/* ---------- status bars ---------- */

const StatusBar = styled.footer`
  display: flex;
  align-items: center;
  gap: 10px;
  height: 23px;
  flex: none;
  padding: 1px 2px 0 7px;
  background: ${blue};
  color: #fff;
`;
const Grip = styled.svg`align-self: flex-end; margin: 0 0 2px auto;`;
const Status = ({ items }) => (
  <StatusBar>
    {items.map((t) => <span key={t}>{t}</span>)}
    <Grip width="9" height="9" viewBox="0 0 9 9" aria-hidden="true">
      <path d="M6 0h2v2H6zM3 3h2v2H3zM6 3h2v2H6zM0 6h2v2H0zM3 6h2v2H3zM6 6h2v2H6z" fill="#a9cdea" />
    </Grip>
  </StatusBar>
);

/* ---------- main window ---------- */

const MainBody = styled.div`
  flex: 1;
  min-height: 0;
  display: flex;
  gap: 4px;
  padding: 2px 2px 3px;
`;
const NavPanel = styled.aside`
  display: flex;
  flex-direction: column;
  width: 172px;
  flex: none;
  border: 1px solid ${line};
`;
const NavTitle = styled.h2`
  margin: 0;
  padding-left: 12px;
  font-size: 14px;
  font-weight: normal;
  line-height: 36px;
`;
const NavGroup = styled.h3`
  margin: 0;
  padding-left: 7px;
  font-size: 14px;
  font-weight: normal;
  line-height: 31px;
`;
const NavItem = styled.button`
  display: flex;
  align-items: center;
  height: ${(p) => p.$h}px;
  margin: 0 2px;
  padding-left: ${(p) => (p.$h > 30 ? 10 : 6)}px;
  background: ${(p) => (p.$on ? "#ececec" : "none")};
`;
const NavSplit = styled.div`height: 12px; margin: auto 1px 0; background: #e8e8e8;`;
const NavFoot = styled.div`display: flex; align-items: center; height: 36px; padding-left: 28px;`;
const MainRight = styled.div`flex: 1; min-width: 0; display: flex; flex-direction: column;`;
const PaneHead = styled.div`
  display: flex;
  justify-content: flex-end;
  align-items: center;
  height: 27px;
  padding: 0 2px 2px 0;
`;
const Frame = styled.div`
  flex: 1;
  min-height: 0;
  display: flex;
  flex-direction: column;
  margin: ${(p) => p.$m || "0"};
  padding-top: ${(p) => p.$pt || 0}px;
  border: 1px solid ${(p) => (p.$light ? soft : line)};
  border-top-width: ${(p) => (p.$thick ? 2 : 1)}px;
`;
const RibbonSpace = styled.div`flex: 1;`;

const charges = ["$1,235.00", "$1,182.00", "$1,235.00", "$1,182.00", "$1,104.00", "$1,320.00"];
const shade = (i, sel) => (i === sel ? "#e5f1fb" : i % 2 ? "#fafafa" : "#efefef");

const MainWindow = () => (
  <WindowFrame $place="main">
    <TitleRow
      title="418: Health Research Conference - Event - EventPro"
      color="#666"
      quick={["swirl", "refresh", "person", "check", "binoc", "board", "calc", "dollar", "coins", "gear", "cal20", "info", "drop", "orgLock", "drop", "custom"]}
    />
    <RibbonHead label="" />
    <RibbonBar>
      <Group w={117} label="Records Creation" />
      <RibbonSpace />
      <Group w={116} label="">
        <SmallCol>
          <Small icon="down" label="Next Event" />
          <Small icon="down" label="Last Event" />
          <Small icon="binoc" label="By Booking #" arrow />
        </SmallCol>
      </Group>
      <CloseGroup />
      <RibbonEnd aria-label="Collapse ribbon"><Icon n="chevUp" /></RibbonEnd>
    </RibbonBar>
    <MainBody>
      <NavPanel>
        <NavTitle>Navigation</NavTitle>
        <NavGroup>Events</NavGroup>
        {["clock", "binoc", "binoc", "pinPlus", "doc", "calBox", "calPin"].map((n, i) => (
          <NavItem key={i} $h={26} $on={i === 0} aria-label={n}><Icon n={n} /></NavItem>
        ))}
        <NavSplit />
        {["house", "pin", "bed", "building", "chat", "check", "calcGray", "board"].map((n) => (
          <NavItem key={n} $h={36} aria-label={n}><Icon n={n} /></NavItem>
        ))}
        <NavFoot>
          {["dbDoc", "sort", "target", "stats", "chevDown"].map((n) => <Tool key={n} $w={28} aria-label={n}><Icon n={n} /></Tool>)}
        </NavFoot>
      </NavPanel>
      <MainRight>
        <PaneHead><button aria-label="Pane menu"><Icon n="dropWide" /></button></PaneHead>
        <Frame $thick $pt={13}>
          <Box $m="0 10px">
            <Legend>Event</Legend>
            <Rows>
              <Field id="m-status" label="Status:" lw={82} tall bg="#00ff00" lookup />
              <Field id="m-conflict" label="Conflict:" lw={82} bg="#32cd32" />
            </Rows>
          </Box>
          <Frame $m="32px 5px 0" $pt={31}>
            <Frame $m="0 5px" $pt={30}>
              <Frame $light $m="0 2px 1px" $pt={1}>
                <Grid $h={192} $m="0 1px">
                  <Table>
                    <colgroup><col /><col width="94" /></colgroup>
                    <thead><tr><Th /><Th>Charge</Th></tr></thead>
                    <tbody>
                      {charges.map((v, i) => (
                        <tr key={i}>
                          <Td $bg={shade(i, 0)} />
                          <Td $bg={shade(i, 0)} $right>{v}</Td>
                        </tr>
                      ))}
                    </tbody>
                  </Table>
                  <GridFoot><Total $w={110} $ml="auto">$7,258.00</Total></GridFoot>
                </Grid>
                <Frame $m="44px 6px 2px" $pt={29}>
                  <Frame $light $m="0 2px 1px" $pt={1}>
                    <Grid $m="0 1px 1px">
                      <Table>
                        <thead><tr><Th /></tr></thead>
                        <tbody>
                          {[0, 1, 2, 3, 4].map((i) => <tr key={i}><Td $bg={shade(i, 4)} $right>0</Td></tr>)}
                        </tbody>
                      </Table>
                      <GridFoot><Total $w={247} $ml="444px" /></GridFoot>
                    </Grid>
                  </Frame>
                </Frame>
              </Frame>
            </Frame>
          </Frame>
        </Frame>
      </MainRight>
    </MainBody>
    <Status items={["User: AliceK_001000", "Client ID: PSI001000AK2", "Memory Usage: 226MB", "Version: 18.0.6"]} />
  </WindowFrame>
);

/* ---------- event location window ---------- */

const WindowBody = styled.div`
  flex: 1;
  min-height: 0;
  display: flex;
  flex-direction: column;
  padding: 14px 5px 0;
`;
const LocTabs = styled.div`margin-top: 13px; flex: none;`;
const itinerary = ["Ses", "Cof", "Ses", "Lun", "Cof"];
const TabButton = ({ icon, label, on }) => <Tab $on={on}><Icon n={icon} />{label}</Tab>;

const LocationWindow = () => (
  <WindowFrame $place="middle">
    <TitleRow
      title="Ballroom A - Event Location"
      color="#a0a0a0"
      quick={["layout", "up", "down", "refresh", "binoc", "board", "saveGray", "saveXGray", "undoGray", "custom"]}
    />
    <RibbonHead />
    <RibbonBar>
      <CloseGroup />
      <Group w={117} label="Records Creation">
        <Big icon="bigPage" w={50} label="New" />
        <Big icon="bigCubes" w={48} label="Clone..." />
      </Group>
      <Group w={162} label="Save">
        <Big icon="bigSaveGray" w={38} label="Save" off />
        <SmallCol $ml={7}><Small icon="saveXGray" label="Save and Close" off /></SmallCol>
      </Group>
      <Group w={626} label="Edit">
        <Big icon="bigInfo" w={52} />
        <Big icon="bigCabAdd" w={84} />
        <Big icon="bigCabCopy" w={88} />
        <Big icon="bigCabMove" w={102} />
        <Big icon="bigList" w={40} />
        <Big icon="bigHand" w={74} />
        <Big icon="bigTag" w={28} />
        <Big icon="bigSpell" w={61} />
        <Small icon="calc" label="Recalculate" />
      </Group>
      <Group w={138} label="Open Related Record"><Big icon="bigRecordGray" w={124} off /></Group>
      <Group w={87} label="View"><Small icon="refresh" label="Refresh" /></Group>
      <Group w={127} label="Records Navigation"><SmallCol $ml={4}><Small icon="binoc" label="Find" /></SmallCol></Group>
    </RibbonBar>
    <WindowBody>
      <Box $m="0 5px">
        <Legend>Event Location</Legend>
        <Rows>
          <Field id="l-booked" label="Booked Date:" lw={82} value="Wed Oct 03 2018" />
          <Field id="l-venue" label="Venue:" lw={82} value="*EP Venue" tall />
          <Field id="l-loc" label="Venue Location:" lw={82} value="Ballroom A" tall bg="#f0ffff" c="#000" />
          <Field id="l-status" label="Status:" lw={82} value="Confirmed" tall bg="#00ff00" c="#0b2a0b" />
          <Field id="l-desc" label="Description:" lw={82} value="Health Research Conference" />
          <Field id="l-setup" label="Setup Type:" lw={82} value="Banquet-Served" tall />
          <Field id="l-owner" label="Owner:" lw={82} tall />
          <Field id="l-conflict" label="Conflict:" lw={82} value="None" bg="#32cd32" c="#fff" />
        </Rows>
      </Box>
      <Box $m="6px 5px 0">
        <Legend>Attendance</Legend>
        <Rows>
          <Row>
            <Label htmlFor="l-use" $w={114}>Use Event Attendance</Label>
            <Check id="l-use" type="checkbox" />
          </Row>
          <Field id="l-att" label="Attendance:" lw={113} />
        </Rows>
      </Box>
      <LocTabs>
        <Tabs>
          <TabButton icon="table" label="Setup" />
          <TabButton icon="staff" label="Staffing" />
          <TabButton icon="utensils" label="Catering" />
        </Tabs>
      </LocTabs>
      <Pane>
        <Tools>
          <Tool aria-label="New"><Icon n="page" s={14} /></Tool>
          <Tool aria-label="Clone"><Icon n="cubes" /></Tool>
          <Sep />
          <Tool aria-label="Move"><Icon n="move16" /></Tool>
          <Tool aria-label="Add"><Icon n="cabAdd16" /></Tool>
          <Tool aria-label="Copy"><Icon n="cabCopy16" /></Tool>
          <Tool aria-label="Move resources"><Icon n="cabMove16" /></Tool>
          <Tool $w={24} aria-label="Link"><Icon n="nodes" /></Tool>
          <Tool $w={8} aria-label="Link options"><Icon n="drop" /></Tool>
          <Tool $w={32} aria-label="Delete"><Icon n="del" /></Tool>
        </Tools>
        <GridOuter>
          <Grid>
            <Table>
              <colgroup><col width="19" /><col width="179" /><col /></colgroup>
              <thead><tr><Th /><Th>Itinerary Type</Th><Th>Function</Th></tr></thead>
              <tbody>
                {itinerary.map((v, i) => (
                  <tr key={i}>
                    <MarkTd>{i === 0 && <Icon n="play" />}</MarkTd>
                    <Td $bg={shade(i, 0)}>Function</Td>
                    <Td $bg={shade(i, 0)}>{v}</Td>
                  </tr>
                ))}
              </tbody>
            </Table>
            <GridFoot />
          </Grid>
        </GridOuter>
      </Pane>
    </WindowBody>
    <Status items={["User: AliceK_001000"]} />
  </WindowFrame>
);

/* ---------- itinerary window ---------- */

const FormArea = styled.div`display: flex; flex: none; padding: 0 5px; margin-bottom: 14px;`;
const FormLeft = styled.div`flex: 1; min-width: 0;`;
const FormRight = styled.div`width: 385px; display: flex; flex-direction: column; gap: 6px;`;
const Splitter = styled.div`
  display: flex;
  flex-direction: column;
  align-items: center;
  justify-content: center;
  gap: 2px;
  width: 22px;
  padding-bottom: 8px;
  i { width: 2px; height: 2px; background: #6e6e6e; }
`;
const gray = "#f0f0f0";

const ItineraryWindow = () => (
  <WindowFrame $place="front" $active>
    <TitleRow
      title="Morning Session 1-1 - Event Location Itinerary"
      color="#666"
      active
      quick={["list", "up", "down", "refresh", "binoc", "boardGray", "save", "saveX", "undo", "custom"]}
    />
    <RibbonHead />
    <RibbonBar>
      <CloseGroup />
      <Group w={117} label="Records Creation">
        <Big icon="bigPage" w={50} label="New" />
        <Big icon="bigCubesGray" w={48} label="Clone..." off />
      </Group>
      <Group w={162} label="Save">
        <Big icon="bigSave" w={38} label="Save" />
        <SmallCol $ml={7}>
          <Small icon="saveX" label="Save and Close" />
          <Small icon="saveNew" label="Save and New" />
          <Small icon="save" label="Save and Clone" />
        </SmallCol>
      </Group>
      <Group w={423} label="Edit">
        <Big icon="bigMove" w={40} label="Move" />
        <Big icon="bigCabAdd" w={90} label="Add Resources" />
        <Big icon="bigCabCopy" w={84} label="Copy Resources" />
        <Big icon="bigCabMove" w={100} label="Move Resources" />
        <SmallCol>
          <Small icon="spell" label="Check Spelling" />
          <Small icon="del" label="Delete" />
          <Small icon="undo" label="Cancel" />
        </SmallCol>
      </Group>
      <Group w={137} label="Open Related Record">
        <Big icon="bigRecord" w={124} label={<>Open Related<br />Record</>} wrap />
      </Group>
      <Group w={87} label="View">
        <SmallCol>
          <Small icon="refresh" label="Refresh" />
          <Small icon="audit" label="Audit Log" />
          <Small icon="boardGray" label="Reports" off />
        </SmallCol>
      </Group>
      <Group w={127} label="Records Navigation">
        <SmallCol $ml={4}>
          <Small icon="binoc" label="Find" />
          <Small icon="up" label="Previous Record" off />
          <Small icon="down" label="Next Record" />
        </SmallCol>
      </Group>
      <RibbonEnd aria-label="Collapse ribbon"><Icon n="chevUp" /></RibbonEnd>
    </RibbonBar>
    <WindowBody>
      <FormArea>
        <FormLeft>
          <Box>
            <Legend>Event Location Itinerary</Legend>
            <Rows>
              <Field id="i-venue" label="Venue:" lw={80} value="*EP Venue" tall bg={gray} c="#000" lookup />
              <Field id="i-loc" label="Event Location:" lw={80} value="Ballroom A" tall bg={gray} c="#000" lookup />
              <Field id="i-type" label="Itinerary Type:" lw={80} value="Function" options={["Function"]} />
              <Field id="i-func" label="Function:" lw={80} value="Session 1" tall clear drop lookup />
              <Field id="i-ftype" label="Function Type:" lw={80} value="Session" tall bg={gray} c="#000" lookup />
              <Field id="i-desc" label="Description:" lw={80} value="Morning Session 1-1" bg="#00ff00" c="#0b2a0b" />
              <Field id="i-supp" label="Supplier:" lw={80} tall clear drop lookup />
            </Rows>
          </Box>
        </FormLeft>
        <Splitter><i /><i /><i /><i /></Splitter>
        <FormRight>
          <Box>
            <Legend>Times</Legend>
            <Rows>
              <Field id="i-start" label="Start Time:" lw={58} value="8:00 AM" />
              <Field id="i-end" label="End Time:" lw={58} value="9:50 AM" />
            </Rows>
          </Box>
          <Box $grow>
            <Legend>Counts</Legend>
            <Rows>
              <Field id="i-set" label="Set Attendance:" lw={93} value="Use Function" options={["Use Function"]} />
              <Field id="i-att" label="Attendance:" lw={93} value="0" bg={gray} c="#000" right />
              <Field id="i-reg" label="Registered Count:" lw={93} value="0" bg={gray} c="#000" right />
            </Rows>
          </Box>
        </FormRight>
      </FormArea>
      <Tabs>
        <TabButton icon="table" label="Setup" />
        <TabButton icon="staff" label="Staffing" />
        <TabButton icon="cloche" label="Catering" />
        <TabButton icon="glasses" label="Beverage" />
        <TabButton icon="box" label="Packages" />
        <TabButton icon="list" label="Function Itinerary" />
        <TabButton icon="assign" label="Attendee Assignments" on />
        <TabButton icon="badge" label="Registered Attendees" />
        <TabButton icon="notes" label="Notes" />
      </Tabs>
      <Pane>
        <Tools>
          <Tool aria-label="New"><Icon n="page" s={14} /></Tool>
          <Tool aria-label="Clone"><Icon n="cubesGray" /></Tool>
          <Sep />
          <Tool aria-label="Delete"><Icon n="del" /></Tool>
          <Sep />
          <Tool aria-label="Open record"><Icon n="record" /></Tool>
          <Sep />
          <Tool $w={24} aria-label="Views"><Icon n="grids" /></Tool>
          <Tool $w={8} aria-label="View options"><Icon n="drop" /></Tool>
          <Tool $w={30} aria-label="Folder"><Icon n="folder" /></Tool>
          <Tool $w={24} aria-label="Audit log"><Icon n="audit" /></Tool>
          <Sep />
          <Tool $w={24} aria-label="Filter"><Icon n="funnel" /></Tool>
          <Tool $w={8} aria-label="Filter options"><Icon n="drop" /></Tool>
          <Sep />
          <Tool $w={30} aria-label="Previous"><Icon n="up" /></Tool>
          <Tool aria-label="Next"><Icon n="down" /></Tool>
          <Sep />
          <Search onSubmit={(e) => e.preventDefault()}>
            <SearchInput placeholder="Text to search..." aria-label="Text to search" />
            <SearchBtn type="submit">Search</SearchBtn>
          </Search>
          <Sep />
          <Tool $w={28} aria-label="Preview"><Icon n="preview" /></Tool>
          <Sep />
          <Tool aria-label="Export"><Icon n="savePage" /></Tool>
          <Tool $w={14} aria-label="Export options"><Icon n="drop" /></Tool>
        </Tools>
        <GridOuter>
          <Grid>
            <Table>
              <colgroup>
                <col width="19" /><col width="185" /><col width="109" /><col width="197" /><col width="164" /><col width="126" /><col />
              </colgroup>
              <thead>
                <tr>
                  <Th />
                  <Th>Attendee Type</Th>
                  <Th>Status</Th>
                  <Th>Name</Th>
                  <Th><SortHead>Start Time<Icon n="sortUp" s={14} /></SortHead></Th>
                  <Th>End Time</Th>
                  <Th>Session Title</Th>
                </tr>
              </thead>
              <tbody>
                <tr>
                  <MarkTd><Icon n="play" /></MarkTd>
                  <Td $focus $bg="#cde4f7">Presenter</Td>
                  <Td $focus $bg="#ffd700" $c="#000">Accepted</Td>
                  <Td $focus>Bedard, Bernard S</Td>
                  <Td $focus $bg="#cde4f7">8:00 AM</Td>
                  <Td $focus $bg="#cde4f7">8:25 AM</Td>
                  <Td $focus $bg="#cde4f7">Challenging Norms Through Research</Td>
                </tr>
                <tr>
                  <MarkTd />
                  <Td $bg="#fafafa">Presenter</Td>
                  <Td $bg="#ffffc0" $c="#000">Invited</Td>
                  <Td $bg="#fafafa">Ross, Larry M</Td>
                  <Td $bg="#fafafa">8:25 AM</Td>
                  <Td $bg="#fafafa">8:45 AM</Td>
                  <Td $bg="#fafafa">Mission-Critical Research Models</Td>
                </tr>
              </tbody>
            </Table>
            <GridFoot><Total $w={195} $ml="311px">2</Total></GridFoot>
          </Grid>
        </GridOuter>
      </Pane>
    </WindowBody>
    <Status items={["User: AliceK_001000"]} />
  </WindowFrame>
);

export default function App() {
  return (
    <Desktop>
      <Global />
      <Defs />
      <MainWindow />
      <LocationWindow />
      <ItineraryWindow />
    </Desktop>
  );
}
